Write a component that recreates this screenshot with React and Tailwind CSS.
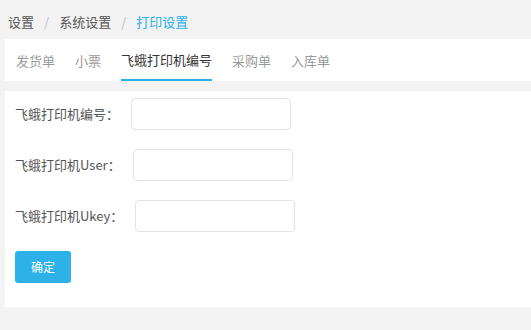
const TABS = ['发货单', '小票', '飞蛾打印机编号', '采购单', '入库单'];

const FIELDS = [
  { label: '飞蛾打印机编号：' },
  { label: '飞蛾打印机User：' },
  { label: '飞蛾打印机Ukey：' },
];

export default function App() {
  return (
    <div
      className="min-h-[330px] w-[531px] bg-[#f3f3f3] text-[13px]"
      style={{ fontFamily: '"Noto Sans CJK SC", "Noto Sans", sans-serif' }}
    >
      {/* Breadcrumb */}
      <div className="flex h-[39px] items-center pl-[8px] pt-[3px] text-[13px] leading-none">
        <span className="text-[#555]">设置</span>
        <span className="mx-[10px] text-[#c0c0c0]">/</span>
        <span className="text-[#555]">系统设置</span>
        <span className="mx-[10px] text-[#c0c0c0]">/</span>
        <span className="text-[#2cb1e8]">打印设置</span>
      </div>

      {/* Tabs */}
      <div className="ml-[5px] flex h-[42px] gap-[20px] bg-white pl-[11px]">
        {TABS.map((t, i) => (
          <div
            key={t}
            className={
              i === 2
                ? 'flex items-center border-b-2 border-[#2cb1e8] pt-[2px] text-[#333]'
                : 'flex items-center pt-[2px] text-[#999]'
            }
          >
            {t}
          </div>
        ))}
      </div>

      {/* Form panel */}
      <div className="ml-[5px] mt-[10px] flex flex-col bg-white pb-[24px] pl-[10px] pt-[7px]">
        <div className="flex flex-col gap-[19px]">
          {FIELDS.map((f) => (
            <div key={f.label} className="flex items-center">
              <span className="text-[#555]">{f.label}</span>
              <input
                type="text"
                className="ml-[12px] h-[32px] w-[160px] rounded-[4px] border border-[#e3e3e3] bg-white outline-none"
              />
            </div>
          ))}
        </div>
        <button className="mt-[19px] h-[32px] w-[56px] rounded-[3px] bg-[#2cb1e8] text-[12px] text-white">
          确定
        </button>
      </div>
    </div>
  );
}
